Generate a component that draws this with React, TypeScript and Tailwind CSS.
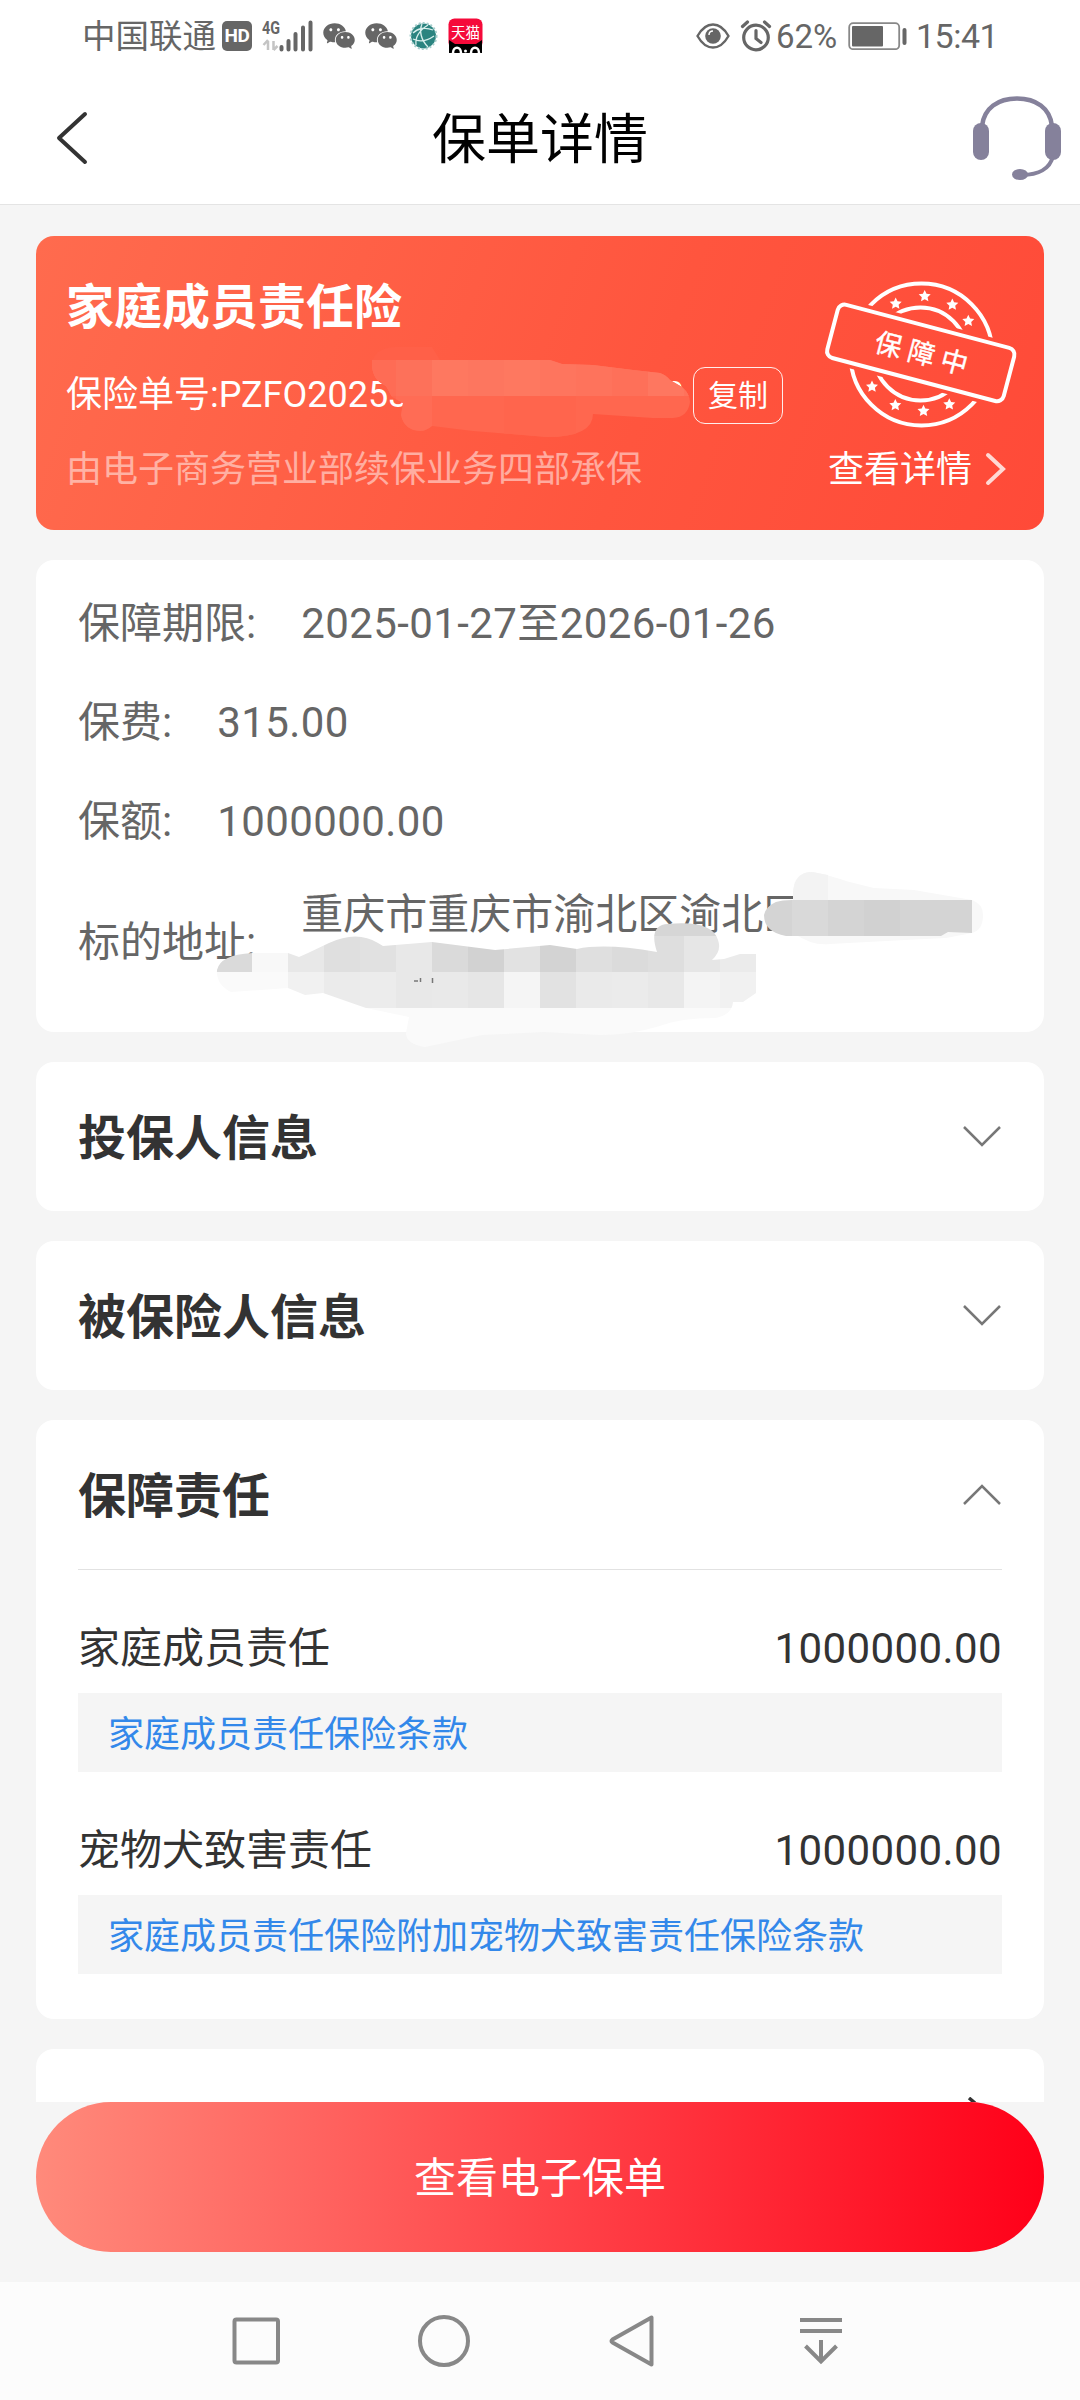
import { useState, type ReactNode } from "react";
import { AiFillWechat } from "react-icons/ai";

const FONT = "font-[Roboto,'Noto_Sans_CJK_SC',sans-serif]";

const POLICY_ROWS = [
  { label: "保障期限:", value: "2025-01-27至2026-01-26" },
  { label: "保费:", value: "315.00" },
  { label: "保额:", value: "1000000.00" },
];

const LIABILITIES = [
  { name: "家庭成员责任", amount: "1000000.00", clause: "家庭成员责任保险条款" },
  { name: "宠物犬致害责任", amount: "1000000.00", clause: "家庭成员责任保险附加宠物犬致害责任保险条款" },
];

function StatusBar() {
  return (
    <div className="flex h-[72px] shrink-0 items-center bg-white pl-[82px] pr-[84px] text-[34px] text-[#666]">
      <span className="pt-[2px] text-[33.5px] leading-[70px]">中国联通</span>
      <span className="ml-[6px] flex h-[30px] w-[30px] items-center justify-center rounded-[5px] bg-[#666] text-[19px] font-bold tracking-[-0.5px] text-white">
        HD
      </span>
      <svg className="ml-[9px]" width="54" height="44" viewBox="261 14 54 44">
        <text x="262" y="34" fontSize="18" fontWeight="700" fill="#666" textLength="18" lengthAdjust="spacingAndGlyphs">4G</text>
        <path d="M268 41v9M263.500 45l4.500-5M273.500 41v9M273.500 50l4-4" stroke="#c4c4c4" strokeWidth="2.500" fill="none" />
        <path d="M281.500 47v2.500M288.500 41v8.500M295.500 34v15.500M303 27.500v22M310.500 22.500v27" stroke="#666" strokeWidth="4" strokeLinecap="round" />
      </svg>
      <WechatIcon />
      <WechatIcon />
      <svg className="ml-[10px]" width="30" height="30" viewBox="0 0 30 30">
        <circle cx="14.500" cy="15" r="12.500" fill="#2b8480" />
        <circle cx="14.500" cy="15" r="13" fill="none" stroke="#a5cdcb" strokeWidth="2" strokeDasharray="2 2" />
        <path d="M4 12c5-5 13-6 20-3M4 18c6 3 14 2 21-3M13 3c-3 7-1 16 6 23M7 24c-1-8 4-15 12-20" stroke="#d8efec" strokeWidth="1.300" fill="none" />
      </svg>
      <svg className="ml-[9px]" width="36" height="36" viewBox="0 0 36 36">
        <rect x="0.500" y="0.500" width="34" height="30" rx="6" fill="#f50a3a" />
        <path d="M1 22l6 4h21l6-4v13H1z" fill="#000" />
        <path d="M5 35c0-7 8-7 8 0M23 35c0-7 8-7 8 0" stroke="#fff" strokeWidth="2.500" fill="none" />
        <circle cx="17.500" cy="33" r="1.500" fill="#fff" />
        <text x="17.500" y="19.500" textAnchor="middle" fontSize="14.500" fill="#fff">天猫</text>
      </svg>

      <div className="ml-auto flex items-center">
        <svg width="34" height="28" viewBox="0 0 34 28">
          <path d="M1.500 14C6 6 11 2.500 17 2.500S28 6 32.500 14C28 22 23 25.500 17 25.500S6 22 1.500 14z" fill="none" stroke="#666" strokeWidth="2.400" />
          <circle cx="17" cy="14" r="7.800" fill="#666" />
          <path d="M13 13c0-2.500 1.500-4 4-4" stroke="#fff" strokeWidth="1.500" fill="none" />
        </svg>
        <svg className="ml-[10px]" width="32" height="32" viewBox="0 0 32 32">
          <circle cx="16" cy="17.500" r="12.300" fill="none" stroke="#666" strokeWidth="3.200" />
          <path d="M2.500 6.500l5-4.500M29.500 6.500L24.500 2M16 10.500v8l5 4" fill="none" stroke="#666" strokeWidth="3.200" strokeLinecap="round" />
        </svg>
        <span className="ml-[4px] w-[64px] pt-px text-[33px]">62%</span>
        <svg className="ml-[8px]" width="60" height="28" viewBox="0 0 60 28">
          <rect x="1.200" y="1.200" width="50" height="26" rx="4" fill="none" stroke="#888" strokeWidth="1.800" />
          <rect x="4" y="4" width="31" height="20.500" rx="1" fill="#666" />
          <path d="M56.500 8v13" stroke="#666" strokeWidth="4" strokeLinecap="round" />
        </svg>
        <span className="ml-[8px] w-[80px] pt-px tracking-[-0.5px]">15:41</span>
      </div>
    </div>
  );
}

function WechatIcon() {
  return <AiFillWechat className="ml-[6px] h-[36px] w-[36px]" />;
}

function Header() {
  return (
    <header className="flex h-[133px] shrink-0 items-center justify-between border-b border-[#e4e4e4] bg-white px-[16px]">
      <svg width="92" height="60" viewBox="16 108 92 60">
        <path d="M85 114L59 138L85 162" fill="none" stroke="#333" strokeWidth="4" strokeLinecap="round" strokeLinejoin="round" />
      </svg>
      <h1 className="pt-[6px] text-[54px] leading-[60px] text-black">保单详情</h1>
      <svg width="92" height="88" viewBox="972 94 92 88">
        <path d="M982 126C984 108 998 98.500 1017 98.500S1050 108 1052 126" fill="none" stroke="#85819b" strokeWidth="4.500" />
        <rect x="973" y="123" width="16" height="37" rx="8" fill="#85819b" />
        <rect x="1045" y="123" width="16" height="37" rx="8" fill="#85819b" />
        <path d="M1053 156C1050 169 1038 175 1022 175" fill="none" stroke="#85819b" strokeWidth="4" />
        <ellipse cx="1020" cy="174.500" rx="8" ry="5.500" fill="#85819b" />
      </svg>
    </header>
  );
}

const STARS = [
  [895.7, 303.5],
  [924.7, 296],
  [952.3, 304.5],
  [968.3, 320.8],
  [872, 386.5],
  [895.3, 405],
  [923.5, 410.7],
  [949.3, 404.3],
];

function Stamp() {
  return (
    <svg width="200" height="156" viewBox="820 276 200 156">
      <mask id="stamp-band">
        <rect x="820" y="276" width="200" height="156" fill="#fff" />
        <rect x="824" y="320" width="194" height="66" fill="#000" transform="rotate(14.800 921 353)" />
      </mask>
      <g fill="none" stroke="#fff" strokeWidth="4">
        <g mask="url(#stamp-band)">
          <circle cx="921.500" cy="354.500" r="71" />
          <circle cx="920.500" cy="354" r="46.500" />
        </g>
        <rect x="829.500" y="325.500" width="182.500" height="55" rx="7" transform="rotate(14.800 921 353)" />
      </g>
      {STARS.map(([x, y]) => (
        <path
          key={x}
          d="M0-6L1.800-2.200L6-1.800L2.900 1.200L3.700 5.300L0 3.200L-3.700 5.300L-2.900 1.200L-6-1.800L-1.800-2.200z"
          fill="#fff"
          transform={`translate(${x} ${y})`}
        />
      ))}
      <text x="874" y="363" fontSize="27" letterSpacing="7" fill="#fff" stroke="#fff" strokeWidth="0.400" transform="rotate(14.800 921 353)">
        保障中
      </text>
    </svg>
  );
}

// Mosaic strokes that hide the private part of the policy number
function NumberMask() {
  const cols = ["#fe6c55", "#fd715a", "#fe7860", "#fd765f", "#fe7860", "#fe755e", "#fe735c", "#fe7059", "#fe7760", "#fe725b", "#fe6f59"];
  return (
    <svg className="absolute left-[334px] top-[108px]" width="324" height="96" viewBox="370 344 324 96">
      <clipPath id="number-mask">
        <path d="M372 360L378 352Q386 347 396 347H432L440 360H550L562 364L593 365L633 370L660 373Q666 375 670 380L682 387Q690 394 690 402Q688 417 673 418L653 418L593 414Q593 437 547 437L473 431L432 426Q426 431 420 431Q404 430 401 415L403 403L392 397L386 386Q372 380 372 364z" />
      </clipPath>
      <g clipPath="url(#number-mask)">
        <rect x="370" y="344" width="324" height="16" fill="#ff6048" />
        <rect x="370" y="360" width="324" height="36" fill="#fe735c" />
        <rect x="370" y="396" width="324" height="44" fill="#ff674f" />
        {cols.map((c, i) => (
          <rect key={i} x={360 + i * 36} y="360" width="36" height="36" fill={c} />
        ))}
        <rect x="396" y="396" width="36" height="44" fill="#ff6c55" />
        <rect x="504" y="396" width="72" height="44" fill="#ff654d" />
      </g>
    </svg>
  );
}

function PolicyCard() {
  return (
    <section className="relative flex h-[294px] shrink-0 justify-between rounded-[18px] bg-[linear-gradient(110deg,#ff6b4e_0%,#ff553e_60%,#ff4a38_100%)] pl-[30px] text-white">
      <div className="flex flex-col">
        <h2 className="mt-[42px] text-[48px] leading-[60px] font-bold">家庭成员责任险</h2>
        <div className="mt-[29px] flex h-[57px] items-center text-[36px] leading-[56px]">
          <div className="flex w-[618px] justify-between pb-[2px]">
            <span>保险单号:PZFO20253</span>
            <span>2</span>
          </div>
          <button className="ml-[9px] h-[57px] w-[90px] rounded-[12px] border border-white/90 text-[30px] leading-[56px]">复制</button>
        </div>
        <p className="mt-[18px] text-[36px] leading-[56px] text-white/50">由电子商务营业部续保业务四部承保</p>
      </div>
      <div className="mr-[24px] flex flex-col items-start pt-[40px]">
        <Stamp />
        <div className="mt-[10px] ml-[8px] flex items-center text-[36px] leading-[56px]">
          查看详情
          <svg className="ml-[12px]" width="24" height="36" viewBox="0 0 24 36">
            <path d="M4 3L19 17L4 31" fill="none" stroke="#ffd9d4" strokeWidth="4" strokeLinecap="round" />
          </svg>
        </div>
      </div>
      <NumberMask />
    </section>
  );
}

const ROW_A = ["#dadada", "#f8f8f8", "#e8e8e8", "#dfdfdf", "#e1e1e1", "#e8e8e8", "#dadada", "#d2d2d2", "#e2e2e2", "#d3d3d3", "#dfdfdf", "#dbdbdb", "#dedede", "#e6e6e6", "#ebebeb"];
const ROW_B = ["#fafafa", "#fafafa", "#f1f1f1", "#ebebeb", "#ececec", "#e8e8e8", "#e9e9e9", "#e6e6e6", "#f5f5f5", "#e2e2e2", "#eaeaea", "#ebebeb", "#e8e8e8", "#f4f4f4", "#f1f1f1"];

// Mosaic strokes over the street part of the address
function AddressMask() {
  return (
    <svg className="absolute left-[164px] top-[300px]" width="800" height="200" viewBox="200 860 800 200">
      <clipPath id="address-mask">
        <path d="M217 970Q220 955 252 953L288 953L299 957L308 953L329 943Q357 930 378 943L383 946L432 942L495 950L550 945L577 949Q605 943 657 952Q648 925 668 924Q712 920 718 940Q722 951 712 960L724 959L740 954H756V993L743 1002L733 1002Q732 1015 715 1018Q680 1018 660 1026Q630 1035 600 1035L544 1032L482 1035L425 1047Q406 1044 406 1033L409 1017L366 1008L323 993L305 995L288 988L231 992Q216 985 217 970z" />
      </clipPath>
      <g clipPath="url(#address-mask)">
        <rect x="650" y="900" width="72" height="36" fill="#d6d6d6" />
        {ROW_A.map((c, i) => (
          <rect key={i} x={216 + i * 36} y="936" width="36" height="36" fill={c} />
        ))}
        {ROW_B.map((c, i) => (
          <rect key={i} x={216 + i * 36} y="972" width="36" height="36" fill={c} />
        ))}
        <rect x="216" y="1008" width="540" height="44" fill="#fafafa" />
      </g>
      <path d="M414 981h4M420.500 978v4M432.500 978v5" stroke="#777" strokeWidth="1.500" />
      <path d="M793 902V893Q794 872 812 872Q822 873 846 881L874 888L914 890L972 900Q983 904 983 915Q983 930 972 933L946 938L905 940L830 944Q812 946 795 934z" fill="#f8f8f8" />
      <path d="M793 900V893Q794 872 812 872L828 875V900z" fill="#f3f3f3" />
      <path d="M776 902Q782 900 792 900H972V933L948 932L941 936H786Q764 932 764 915Q766 906 776 902z" fill="#d4d4d4" />
      <rect x="792" y="900" width="36" height="36" fill="#d9d9d9" />
      <rect x="864" y="900" width="36" height="36" fill="#d1d1d1" />
    </svg>
  );
}

function PolicyInfo() {
  return (
    <section className="relative h-[472px] shrink-0 rounded-[18px] bg-white px-[42px] pt-[14px] text-[42px] text-[#666]">
      {POLICY_ROWS.map((row) => (
        <div key={row.label} className="flex h-[99px] items-center gap-[45px]">
          <span>{row.label}</span>
          <span className="tracking-[0.4px]">{row.value}</span>
        </div>
      ))}
      <div className="mt-[12px] flex h-[120px] items-center gap-[45px] leading-[60px]">
        <span>标的地址:</span>
        <span className="self-start pt-[2px]">重庆市重庆市渝北区渝北区</span>
      </div>
      <AddressMask />
    </section>
  );
}

function Panel({ title, defaultOpen = false, children }: { title: string; defaultOpen?: boolean; children?: ReactNode }) {
  const [open, setOpen] = useState(defaultOpen);

  return (
    <section className="shrink-0 rounded-[18px] bg-white px-[42px]">
      <button className="flex h-[149px] w-full items-center justify-between" onClick={() => setOpen(!open)}>
        <span className="pt-[5px] text-[48px] leading-[60px] font-bold text-[#333]">{title}</span>
        <svg className="mr-px" width="38" height="24" viewBox="0 0 38 24">
          <path d={open ? "M1 21L19 3L37 21" : "M1 2L19 20L37 2"} fill="none" stroke="#777" strokeWidth="2.500" />
        </svg>
      </button>
      {open && children}
    </section>
  );
}

function NavBar() {
  return (
    <nav className="flex h-[118px] shrink-0 items-start bg-[#fcfcfc] pt-[29px] pl-[228px] text-[#888]">
      <svg width="56" height="60" viewBox="228 2311 56 60" fill="none" stroke="currentColor" strokeWidth="4">
        <rect x="234.500" y="2319.500" width="43.500" height="43" rx="2" />
      </svg>
      <svg className="ml-[132px]" width="56" height="60" viewBox="416 2311 56 60" fill="none" stroke="currentColor" strokeWidth="4">
        <circle cx="444" cy="2341" r="24" />
      </svg>
      <svg className="ml-[132px]" width="56" height="60" viewBox="604 2311 56 60" fill="none" stroke="currentColor" strokeWidth="4">
        <path d="M651.500 2317.500V2364.500L612.500 2342.500Q610.500 2341 612.500 2339.500z" strokeLinejoin="round" />
      </svg>
      <svg className="ml-[132px]" width="56" height="60" viewBox="792 2311 56 60" fill="none" stroke="currentColor" strokeWidth="4">
        <path d="M800 2320H842M800 2331H842M821 2340V2361M805.500 2346L821 2361.500L836.500 2346" />
      </svg>
    </nav>
  );
}

export default function App() {
  return (
    <div className={`flex h-[2400px] w-[1080px] flex-col overflow-hidden bg-[#f5f5f5] ${FONT}`}>
      <StatusBar />
      <Header />
      <main className="flex min-h-0 flex-1 flex-col gap-[30px] overflow-hidden px-[36px] pt-[31px]">
        <PolicyCard />
        <PolicyInfo />
        <Panel title="投保人信息" />
        <Panel title="被保险人信息" />
        <Panel title="保障责任" defaultOpen>
          <div className="border-t border-[#e2e2e2] pb-[45px]">
            {LIABILITIES.map((item) => (
              <div key={item.name} className="pt-[43px] text-[#333]">
                <div className="mb-[9px] flex h-[71px] items-center justify-between text-[42px]">
                  <span>{item.name}</span>
                  <span className="tracking-[0.4px]">{item.amount}</span>
                </div>
                <a className="block h-[79px] bg-[#f5f5f5] pl-[30px] text-[36px] leading-[84px] text-[#3388ea]">{item.clause}</a>
              </div>
            ))}
          </div>
        </Panel>
        <section className="flex h-[149px] shrink-0 justify-end rounded-t-[18px] bg-white pr-[67px]">
          <svg className="mt-[48px]" width="10" height="6" viewBox="0 0 10 6">
            <path d="M2 1l6 5" stroke="#333" strokeWidth="3.500" />
          </svg>
        </section>
      </main>
      <footer className="h-[180px] shrink-0 px-[36px]">
        <button className="h-[150px] w-full rounded-full bg-[linear-gradient(90deg,#ff8a7b,#ff0019)] text-[42px] leading-[154px] text-white">
          查看电子保单
        </button>
      </footer>
      <NavBar />
    </div>
  );
}
